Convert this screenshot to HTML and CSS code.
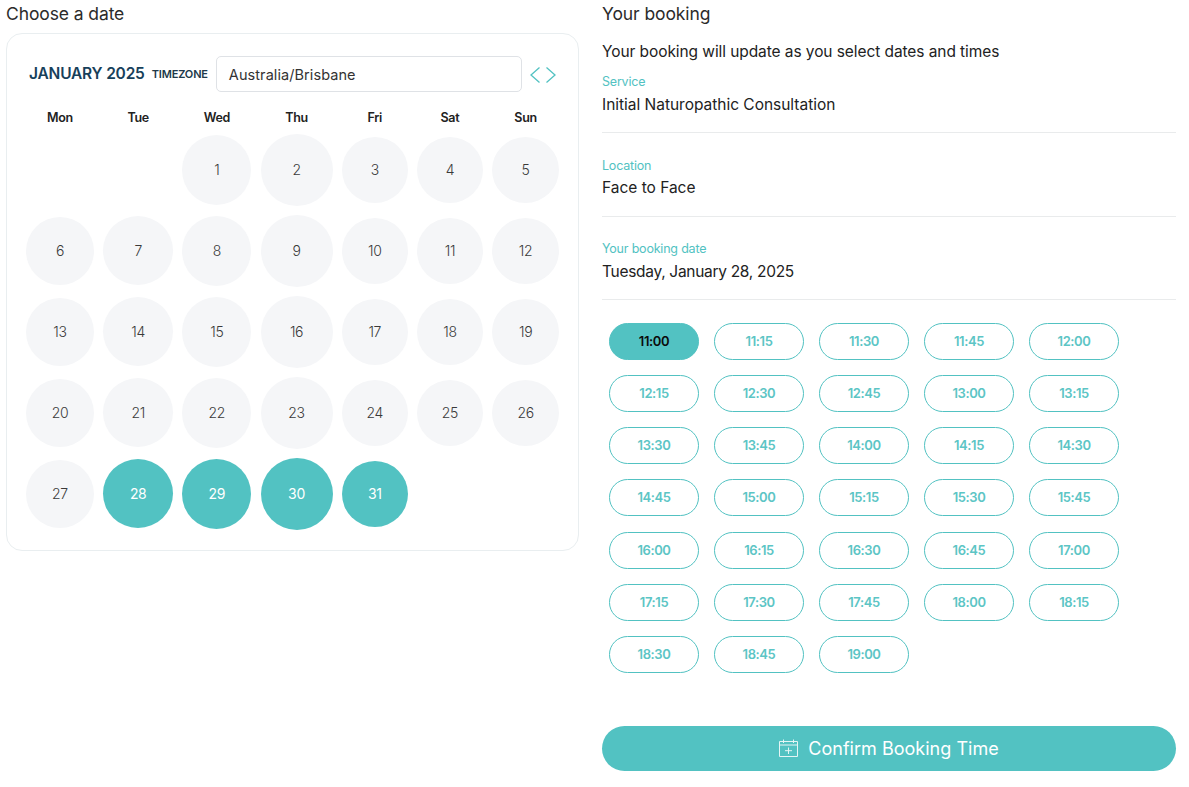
FILE: index.html
```html
<!DOCTYPE html>
<html lang="en">
<head>
<meta charset="utf-8">
<title>Choose a date</title>
<link rel="stylesheet" href="styles.css">
</head>
<body>
<main class="page">
  <section class="left">
    <h2 class="heading">Choose a date</h2>
    <div class="card">
      <div class="cal-head">
        <span class="month">JANUARY 2025</span>
        <span class="tz-label">TIMEZONE</span>
        <div class="tz-input">Australia/Brisbane</div>
        <div class="arrows">
          <svg class="arrow" viewBox="0 0 10 16"><path d="M9.500 .5 1 8l8.500 7.500"/></svg>
          <svg class="arrow" viewBox="0 0 10 16"><path d="M.5 .5 9 8l-8.500 7.500"/></svg>
        </div>
      </div>
      <div class="grid">
        <span class="dow">Mon</span><span class="dow">Tue</span><span class="dow">Wed</span><span class="dow">Thu</span><span class="dow">Fri</span><span class="dow">Sat</span><span class="dow">Sun</span>
        <span class="cell"></span><span class="cell"></span>
        <span class="cell"><b class="day c3">1</b></span><span class="cell"><b class="day c4">2</b></span><span class="cell"><b class="day c5">3</b></span><span class="cell"><b class="day c6">4</b></span><span class="cell"><b class="day c7">5</b></span>
        <span class="cell"><b class="day c1">6</b></span><span class="cell"><b class="day c2">7</b></span><span class="cell"><b class="day c3">8</b></span><span class="cell"><b class="day c4">9</b></span><span class="cell"><b class="day c5">10</b></span><span class="cell"><b class="day c6">11</b></span><span class="cell"><b class="day c7">12</b></span>
        <span class="cell"><b class="day c1">13</b></span><span class="cell"><b class="day c2">14</b></span><span class="cell"><b class="day c3">15</b></span><span class="cell"><b class="day c4">16</b></span><span class="cell"><b class="day c5">17</b></span><span class="cell"><b class="day c6">18</b></span><span class="cell"><b class="day c7">19</b></span>
        <span class="cell"><b class="day c1">20</b></span><span class="cell"><b class="day c2">21</b></span><span class="cell"><b class="day c3">22</b></span><span class="cell"><b class="day c4">23</b></span><span class="cell"><b class="day c5">24</b></span><span class="cell"><b class="day c6">25</b></span><span class="cell"><b class="day c7">26</b></span>
        <span class="cell"><b class="day c1">27</b></span><span class="cell"><b class="day c2 on">28</b></span><span class="cell"><b class="day c3 on">29</b></span><span class="cell"><b class="day c4 on">30</b></span><span class="cell"><b class="day c5 on">31</b></span>
      </div>
    </div>
  </section>
  <section class="right">
    <h2 class="heading">Your booking</h2>
    <p class="intro">Your booking will update as you select dates and times</p>
    <div class="info service"><span class="label">Service</span><span class="value">Initial Naturopathic Consultation</span></div>
    <div class="info location"><span class="label">Location</span><span class="value">Face to Face</span></div>
    <div class="info when"><span class="label">Your booking date</span><span class="value">Tuesday, January 28, 2025</span></div>
    <div class="times">
      <button class="time sel">11:00</button><button class="time">11:15</button><button class="time">11:30</button><button class="time">11:45</button><button class="time">12:00</button>
      <button class="time">12:15</button><button class="time">12:30</button><button class="time">12:45</button><button class="time">13:00</button><button class="time">13:15</button>
      <button class="time">13:30</button><button class="time">13:45</button><button class="time">14:00</button><button class="time">14:15</button><button class="time">14:30</button>
      <button class="time">14:45</button><button class="time">15:00</button><button class="time">15:15</button><button class="time">15:30</button><button class="time">15:45</button>
      <button class="time">16:00</button><button class="time">16:15</button><button class="time">16:30</button><button class="time">16:45</button><button class="time">17:00</button>
      <button class="time">17:15</button><button class="time">17:30</button><button class="time">17:45</button><button class="time">18:00</button><button class="time">18:15</button>
      <button class="time">18:30</button><button class="time">18:45</button><button class="time">19:00</button>
    </div>
    <button class="confirm">
      <svg class="cal-icon" viewBox="0 0 19 18"><path d="M.5 2.500h18v15H.5zM.5 6h18M4.500 .5v3.500M14.500 .5v3.500M9.500 8.500v6.500M6 11.700h7"/></svg>
      <span class="confirm-text">Confirm Booking Time</span>
    </button>
  </section>
</main>
</body>
</html>
```
FILE: styles.css
```css
* { box-sizing: border-box; }
html, body { margin: 0; padding: 0; background: #fff; }
body { font-family: Inter, "Liberation Sans", sans-serif; color: #2b2b2b; height: 787px; overflow: hidden; }
.page { display: flex; padding: 0 13px 0 6px; gap: 23px; }
.left { width: 573px; flex: none; }
.right { width: 574px; flex: none; }
.heading { margin: 0; padding-top: 3px; font-size: 17.500px; line-height: 22px; font-weight: 400; letter-spacing: -.1px; }
.card { margin-top: 8px; height: 518px; border: 1px solid #e9eef0; border-radius: 16px; padding: 22px 19px 0 19px; }
.cal-head { display: flex; align-items: center; height: 36px; padding-left: 3px; }
.month { padding-bottom: 2px; font-size: 15.500px; font-weight: 600; letter-spacing: -.2px; color: #17405a; white-space: nowrap; }
.tz-label { margin-left: 7px; font-size: 11px; font-weight: 600; letter-spacing: -.15px; color: #20394a; }
.tz-input { margin-left: 8px; width: 306px; height: 36px; border: 1px solid #dfe2e6; border-radius: 5px; padding: 0 12px; font-size: 14.500px; line-height: 35px; letter-spacing: .07px; color: #333; }
.arrows { display: flex; gap: 6px; margin-left: 8px; margin-top: 1px; }
.arrow { width: 10px; height: 16px; fill: none; stroke: #52c2c2; stroke-width: 1.300; }
.grid { display: grid; grid-template-columns: 68px 70px 69px 72px 66px 66px 67px; column-gap: 9.200px; grid-template-rows: 24px repeat(5, 81px); margin-top: 13px; }
.dow { font-size: 12.500px; font-weight: 600; letter-spacing: -.3px; line-height: 25px; text-align: center; color: #222; }
.cell { display: flex; align-items: center; justify-content: center; }
.day { display: flex; align-items: center; justify-content: center; width: 100%; border-radius: 50%; background: #f5f6f8; font-size: 14px; font-weight: 300; letter-spacing: -.3px; color: #3a3a3a; }
.c1 { height: 68px; } .c2 { height: 69px; } .c3 { height: 70px; } .c4 { height: 72px; } .c5, .c6, .c7 { height: 66px; }
.day.on { background: #52c2c2; color: #fff; font-weight: 400; }
.intro { margin: 16px 0 0; font-size: 15.500px; line-height: 22px; letter-spacing: -.08px; color: #222; }
.info { display: flex; flex-direction: column; border-bottom: 1px solid #e9ebec; }
.service { height: 70px; padding-top: 10px; }
.location { height: 84px; padding-top: 24px; }
.when { height: 83px; padding-top: 23px; }
.label { font-size: 12.500px; line-height: 17px; letter-spacing: -.2px; color: #52c2c2; }
.value { margin-top: 4px; font-size: 15.500px; line-height: 22px; letter-spacing: -.02px; color: #222; }
.location .value { margin-top: 3px; }
.when .value { letter-spacing: -.3px; }
.times { display: grid; grid-template-columns: repeat(5, 90px); column-gap: 15px; grid-auto-rows: 37px; row-gap: 15.170px; padding: 23px 0 0 7px; }
.time { padding: 0; border: 1px solid #52c2c2; border-radius: 19px; background: #fff; font: 600 13px/1 Inter, "Liberation Sans", sans-serif; letter-spacing: -.4px; color: #5cc5c5; }
.time.sel { background: #52c2c2; color: #0b0b0b; }
.confirm { display: flex; align-items: center; justify-content: center; gap: 10px; margin-top: 53px; width: 574px; height: 45px; border: 0; border-radius: 23px; background: #52c2c2; color: #fff; font: 400 18px/1 Inter, "Liberation Sans", sans-serif; letter-spacing: .02px; }
.confirm-text { padding-top: 1px; }
.cal-icon { width: 19px; height: 18px; fill: none; stroke: #fff; stroke-width: 1; opacity: .85; }
```
